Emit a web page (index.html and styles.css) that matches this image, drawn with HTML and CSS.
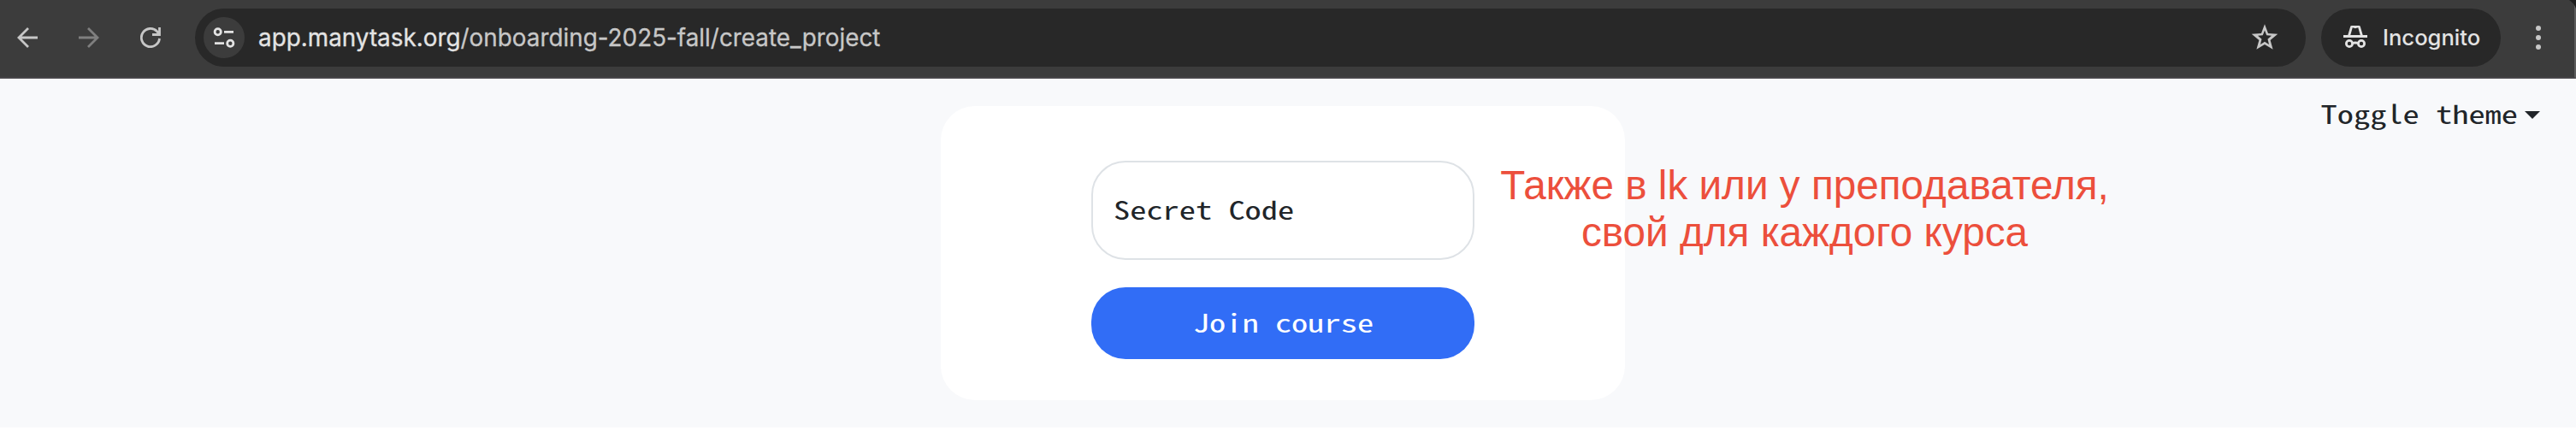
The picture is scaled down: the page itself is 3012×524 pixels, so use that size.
FILE: index.html
```html
<!DOCTYPE html>
<html lang="ru">
<head>
<meta charset="utf-8">
<title>Manytask</title>
<link rel="stylesheet" href="styles.css">
</head>
<body>
<header class="toolbar">
  <nav class="nav">
    <svg class="icon" viewBox="0 0 24 24" width="24" height="24"><path d="M24 12H2M13 1L2 12l11 11"/></svg>
    <svg class="icon icon-off" viewBox="0 0 24 24" width="24" height="24"><path d="M0 12h22M11 1l11 11-11 11"/></svg>
    <svg class="icon" viewBox="0 0 24 24" width="24" height="24"><path d="M22.500 13A10.600 10.600 0 1 1 19.600 4.700L22 8M22.500 0v8.500H14"/></svg>
  </nav>
  <div class="address">
    <span class="site-info">
      <svg class="icon icon-bright" viewBox="0 0 26 24" width="26" height="24"><circle cx="5.700" cy="5.300" r="3.600"/><path d="M13 5.300H24M2 18.700H13"/><circle cx="20.300" cy="18.700" r="3.600"/></svg>
    </span>
    <span class="url"><span class="host">app.manytask.org</span>/onboarding-2025-fall/create_project</span>
    <svg class="star" viewBox="0 0 32 32" width="32" height="32"><path fill-rule="evenodd" d="M16 .3L20 11l11.300.7-8.700 7.300 3 10.800L16 24l-9.600 5.800 3-10.800L.7 11.700 12 11zM16 7.500l-2.200 5.800-5.800.5 4.500 4-1.500 6.200 5-3.200 5 3.200-1.500-6.200 4.500-4-5.800-.5z"/></svg>
  </div>
  <div class="incognito">
    <svg class="icon icon-bright" viewBox="0 0 28 28" width="28" height="28"><path d="M0 12.500h28M6.500 12L9.500 1.500l2-.6 2.500.8 2.500-.8 2 .6L21.500 12M10.500 20.500q3.500-1 7 0"/><circle cx="7" cy="21" r="3.600"/><circle cx="21" cy="21" r="3.600"/></svg>
    <span class="incognito-label">Incognito</span>
  </div>
  <svg class="menu" viewBox="0 0 6 28" width="6" height="28"><circle cx="3" cy="3" r="3"/><circle cx="3" cy="14" r="3"/><circle cx="3" cy="25" r="3"/></svg>
  <svg class="corner" viewBox="0 0 8 10" width="8" height="10"><path d="M0 0h8v10Q6 4 0 0z"/></svg>
</header>
<main class="page">
  <form class="card">
    <div class="field"><span class="mono mono-left">Secret Code</span></div>
    <div class="join"><span class="mono">Join course</span></div>
  </form>
  <p class="note">Также в lk или у преподавателя,<br>свой для каждого курса</p>
  <div class="theme"><span class="mono mono-right">Toggle theme</span><span class="caret"></span></div>
</main>
</body>
</html>
```

FILE: styles.css
```css
* { box-sizing: border-box; }
body { margin: 0; width: 3012px; height: 524px; background: #fff; overflow: hidden; }
.toolbar { position: relative; height: 92px; padding: 10px 39px 12px 20px; display: flex; align-items: center; background: #3c3c3c; border-bottom: 2px solid #484649; border-right: 2px solid #5c5c5c; }
.nav { display: flex; gap: 48px; width: 208px; flex: none; }
.icon { fill: none; stroke: #c7c7c7; stroke-width: 2.8; flex: none; display: block; }
.icon-off { stroke: #7f7f7f; }
.icon-bright { stroke: #e3e3e3; }
.address { width: 2468px; height: 68px; border-radius: 34px; background: #282828; display: flex; align-items: center; padding: 0 32px 0 10px; }
.site-info { width: 48px; height: 48px; border-radius: 50%; background: #3c3c3c; display: grid; place-items: center; margin-right: 16px; }
.url { font: 27.85px/34px Inter, sans-serif; color: #c7c7c7; flex: 1; white-space: nowrap; -webkit-text-stroke: 0.3px; }
.host { color: #e3e3e3; }
.star { fill: #c7c7c7; }
.incognito { width: 210px; height: 68px; border-radius: 34px; background: #282828; margin-left: 18px; padding-left: 26px; display: flex; align-items: center; gap: 18px; }
.incognito-label { font: 500 25.6px/34px Inter, sans-serif; color: #e3e3e3; }
.menu { margin-left: auto; fill: #c7c7c7; }
.corner { position: absolute; right: -2px; top: 0; fill: #1e1e1e; }
.page { height: 408px; background: #f8f9fb; padding: 32px 42px 0 1100px; display: flex; align-items: flex-start; position: relative; }
.card { width: 800px; height: 344px; border-radius: 40px; background: #fff; display: flex; flex-direction: column; align-items: center; gap: 32px; padding-top: 64px; }
.mono { display: inline-block; font: 30px/48px "Noto Sans Mono CJK SC", "Liberation Mono", monospace; transform: scaleX(1.28); white-space: nowrap; }
.mono-left { transform-origin: left; }
.mono-right { transform-origin: right; }
.field { width: 448px; height: 116px; border: 2px solid #dee2e6; border-radius: 40px; padding: 30px 24px; color: #212529; }
.join { width: 448px; height: 84px; border-radius: 40px; background: #316df6; color: #fff; text-align: center; padding-top: 16px; }
.note { position: absolute; left: 1750px; top: 97px; width: 720px; margin: 0; text-align: center; white-space: nowrap; color: #ec4f3c; font: 47.7px/55px "Liberation Sans", Arial, sans-serif; }
.theme { margin-left: auto; display: flex; align-items: center; color: #212529; margin-top: -16px; }
.caret { margin: 5px 0 0 8px; border: 9px solid transparent; border-top-color: #212529; border-bottom: 0; }
```
